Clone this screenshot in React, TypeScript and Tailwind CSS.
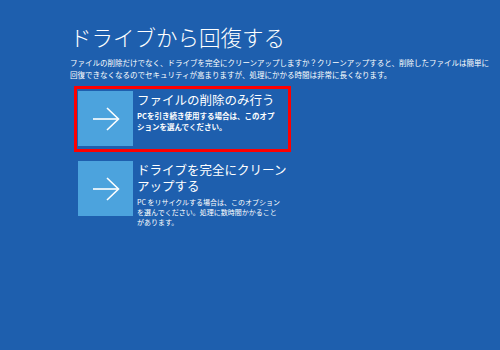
import React from 'react';

const Arrow: React.FC = () => (
  <svg width="28" height="24" viewBox="0 0 28 24" fill="none" stroke="white" strokeWidth="1.6">
    <path d="M1 12 H26" />
    <path d="M15 1 L26.5 12 L15 23" />
  </svg>
);

interface OptionProps {
  title: React.ReactNode;
  desc: React.ReactNode;
  selected?: boolean;
  descClass: string;
}

const Option: React.FC<OptionProps> = ({ title, desc, selected, descClass }) => (
  <div
    className={`flex gap-[4px] w-[217px] min-h-[66px] border-[3px] px-[1px] py-[2px] ${
      selected ? 'border-[#ff0000]' : 'border-transparent'
    }`}
  >
    <div className="w-[55px] h-[55px] shrink-0 bg-[#4ca3dd] flex items-center justify-center">
      <Arrow />
    </div>
    <div className="pt-[1px] whitespace-nowrap">
      <div className="text-[12.5px] leading-[16px]">{title}</div>
      <div className={descClass}>{desc}</div>
    </div>
  </div>
);

export default function App() {
  return (
    <div className="w-[500px] h-[350px] bg-[#1e5fae] text-white pl-[70px] pt-[22px] font-['Noto_Sans_CJK_JP',sans-serif]">
      <h1 className="text-[21.5px] font-light leading-[30px]">ドライブから回復する</h1>
      <p className="text-[7.5px] leading-[12px] mt-[5px]">
        ファイルの削除だけでなく、ドライブを完全にクリーンアップしますか？クリーンアップすると、削除したファイルは簡単に
        <br />
        回復できなくなるのでセキュリティが高まりますが、処理にかかる時間は非常に長くなります。
      </p>
      <div className="ml-[4px] mt-[5px] flex flex-col gap-[4px]">
        <Option
          selected
          title="ファイルの削除のみ行う"
          descClass="text-[7.5px] font-bold leading-[11px] mt-[2px]"
          desc={
            <>
              PCを引き続き使用する場合は、このオプ
              <br />
              ションを選んでください。
            </>
          }
        />
        <Option
          title={
            <>
              ドライブを完全にクリーン
              <br />
              アップする
            </>
          }
          descClass="text-[7px] leading-[10px] mt-[3px]"
          desc={
            <>
              PC をリサイクルする場合は、このオプション
              <br />
              を選んでください。処理に数時間かかること
              <br />
              があります。
            </>
          }
        />
      </div>
    </div>
  );
}
